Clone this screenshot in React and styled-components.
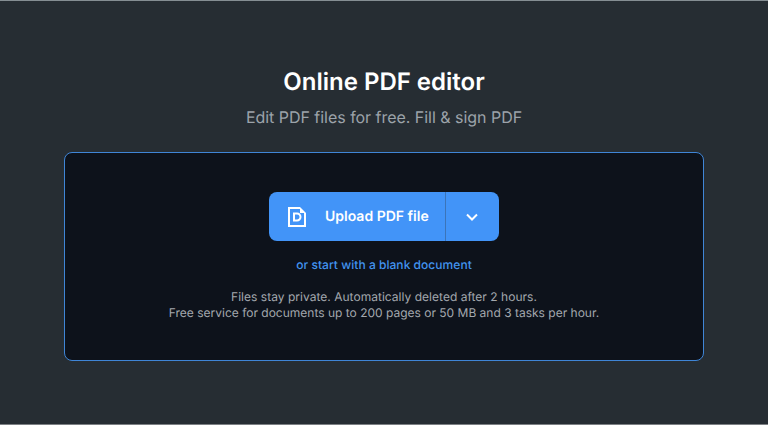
import React from "react";
import styled, { createGlobalStyle } from "styled-components";

const GlobalStyle = createGlobalStyle`
  * { box-sizing: border-box; }
  body {
    margin: 0;
    background: #262d33;
    font-family: Inter, sans-serif;
    text-rendering: geometricPrecision;
  }
`;
const Page = styled.main`
  height: 425px;
  padding: 65px 64px 0;
  background: #262d33;
  border-top: 1px solid #858e93;
  border-bottom: 1px solid #7c8084;
  text-align: center;
`;
const Title = styled.h1`
  margin: 0;
  font-size: 24px;
  line-height: 32px;
  font-weight: 600;
  color: #fff;
`;
const Subtitle = styled.p`
  margin: 7px 0 0;
  font-size: 16px;
  line-height: 24px;
  letter-spacing: -0.03px;
  color: #9ca3aa;
`;
const DropZone = styled.section`
  display: flex;
  flex-direction: column;
  align-items: center;
  height: 209px;
  margin-top: 23px;
  padding-top: 39px;
  background: #0d121b;
  border: 1px solid #3f85d6;
  border-radius: 8px;
`;
const SplitButton = styled.div`
  display: flex;
  width: 230px;
  height: 49px;
  border-radius: 8px;
  overflow: hidden;
  background: #4294f8;
`;
const UploadButton = styled.button`
  display: flex;
  align-items: center;
  gap: 16px;
  width: 177px;
  padding: 0 0 0 16px;
  border: 0;
  border-right: 1px solid #3b74b9;
  background: transparent;
  color: #fff;
  font: 600 14px/20px Inter, sans-serif;
  text-rendering: geometricPrecision;
  white-space: nowrap;
`;
const MenuButton = styled.button`
  display: flex;
  flex: 1;
  align-items: center;
  justify-content: center;
  padding: 0 2px 0 0;
  border: 0;
  background: transparent;
  color: #fff;
`;
const BlankLink = styled.a`
  margin-top: 16px;
  font-size: 12px;
  line-height: 16px;
  font-weight: 500;
  letter-spacing: 0.04px;
  color: #4294f0;
`;
const Notice = styled.p`
  margin: 16px 0 0;
  font-size: 12px;
  line-height: 16px;
  color: #a3a8ae;
`;
const NoticeLine = styled.span`
  display: block;
  letter-spacing: ${({ $spacing }) => $spacing || "normal"};
`;

export default function App() {
  return (
    <Page>
      <GlobalStyle />
      <Title>Online PDF editor</Title>
      <Subtitle>Edit PDF files for free. Fill &amp; sign PDF</Subtitle>
      <DropZone>
        <SplitButton>
          <UploadButton>
            <svg width="24" height="24" viewBox="0 0 24 24" fill="none" stroke="currentColor" strokeWidth="2">
              <path d="M15 3H4v18h16V8" />
              <path d="M15 2l6 6h-6z" fill="currentColor" stroke="none" />
              <path d="M9 8.5h3a3.5 3.5 0 0 1 0 7H9z" />
            </svg>
            Upload PDF file
          </UploadButton>
          <MenuButton aria-label="More sources">
            <svg width="16" height="16" viewBox="0 0 16 16" fill="none" stroke="currentColor" strokeWidth="2">
              <path d="M3 5.5l5 5 5-5" />
            </svg>
          </MenuButton>
        </SplitButton>
        <BlankLink>or start with a blank document</BlankLink>
        <Notice>
          <NoticeLine $spacing="0.025px">Files stay private. Automatically deleted after 2 hours.</NoticeLine>
          <NoticeLine>Free service for documents up to 200 pages or 50 MB and 3 tasks per hour.</NoticeLine>
        </Notice>
      </DropZone>
    </Page>
  );
}
